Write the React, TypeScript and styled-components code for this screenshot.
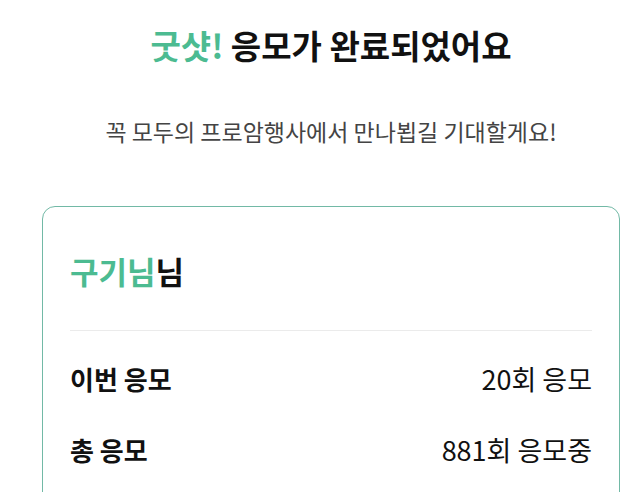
import styled, { createGlobalStyle } from 'styled-components';

const GlobalStyle = createGlobalStyle`
  body {
    margin: 0;
    background: #ffffff;
    font-family: "Noto Sans CJK KR", "Noto Sans", sans-serif;
    color: #111111;
  }
`

const Page = styled.main`
  display: flex;
  flex-direction: column;
  align-items: center;
  padding: 24px 20px 0 42px;
  height: 492px;
  box-sizing: border-box;
  overflow: hidden;
`

const Title = styled.h1`
  margin: 0;
  font-size: 33px;
  line-height: 42px;
  font-weight: 700;
`

const Accent = styled.span`
  color: #4cbb91;
`

const Subtitle = styled.p`
  margin: 50px 0 0;
  font-size: 23px;
  line-height: 30px;
  color: #444444;
`

const Card = styled.section`
  align-self: stretch;
  margin-top: 60px;
  border: 1.5px solid #72b9a6;
  border-radius: 13px;
  padding: 44px 27px 40px;
`

const Name = styled.h2`
  margin: 0;
  font-size: 31px;
  line-height: 40px;
  font-weight: 700;
`

const Divider = styled.hr`
  margin: 39px 0 0;
  border: 0;
  border-top: 1px solid #ebebeb;
`

const Rows = styled.div`
  display: flex;
  flex-direction: column;
  padding-top: 12px;
`

const Row = styled.div`
  display: flex;
  justify-content: space-between;
  align-items: center;
  height: 71px;
`

const Label = styled.span`
  font-size: 26px;
  font-weight: 700;
`

const Value = styled.span`
  font-size: 27px;
  font-weight: 400;
`

const rows = [
  { label: '이번 응모', value: '20회 응모' },
  { label: '총 응모', value: '881회 응모중' },
]

export default function App() {
  return (
    <>
      <GlobalStyle />
      <Page>
        <Title>
          <Accent>굿샷!</Accent> 응모가 완료되었어요
        </Title>
        <Subtitle>꼭 모두의 프로암행사에서 만나뵙길 기대할게요!</Subtitle>

        <Card>
          <Name>
            <Accent>구기님</Accent>님
          </Name>
          <Divider />
          <Rows>
            {rows.map((r) => (
              <Row key={r.label}>
                <Label>{r.label}</Label>
                <Value>{r.value}</Value>
              </Row>
            ))}
          </Rows>
        </Card>
      </Page>
    </>
  )
}
